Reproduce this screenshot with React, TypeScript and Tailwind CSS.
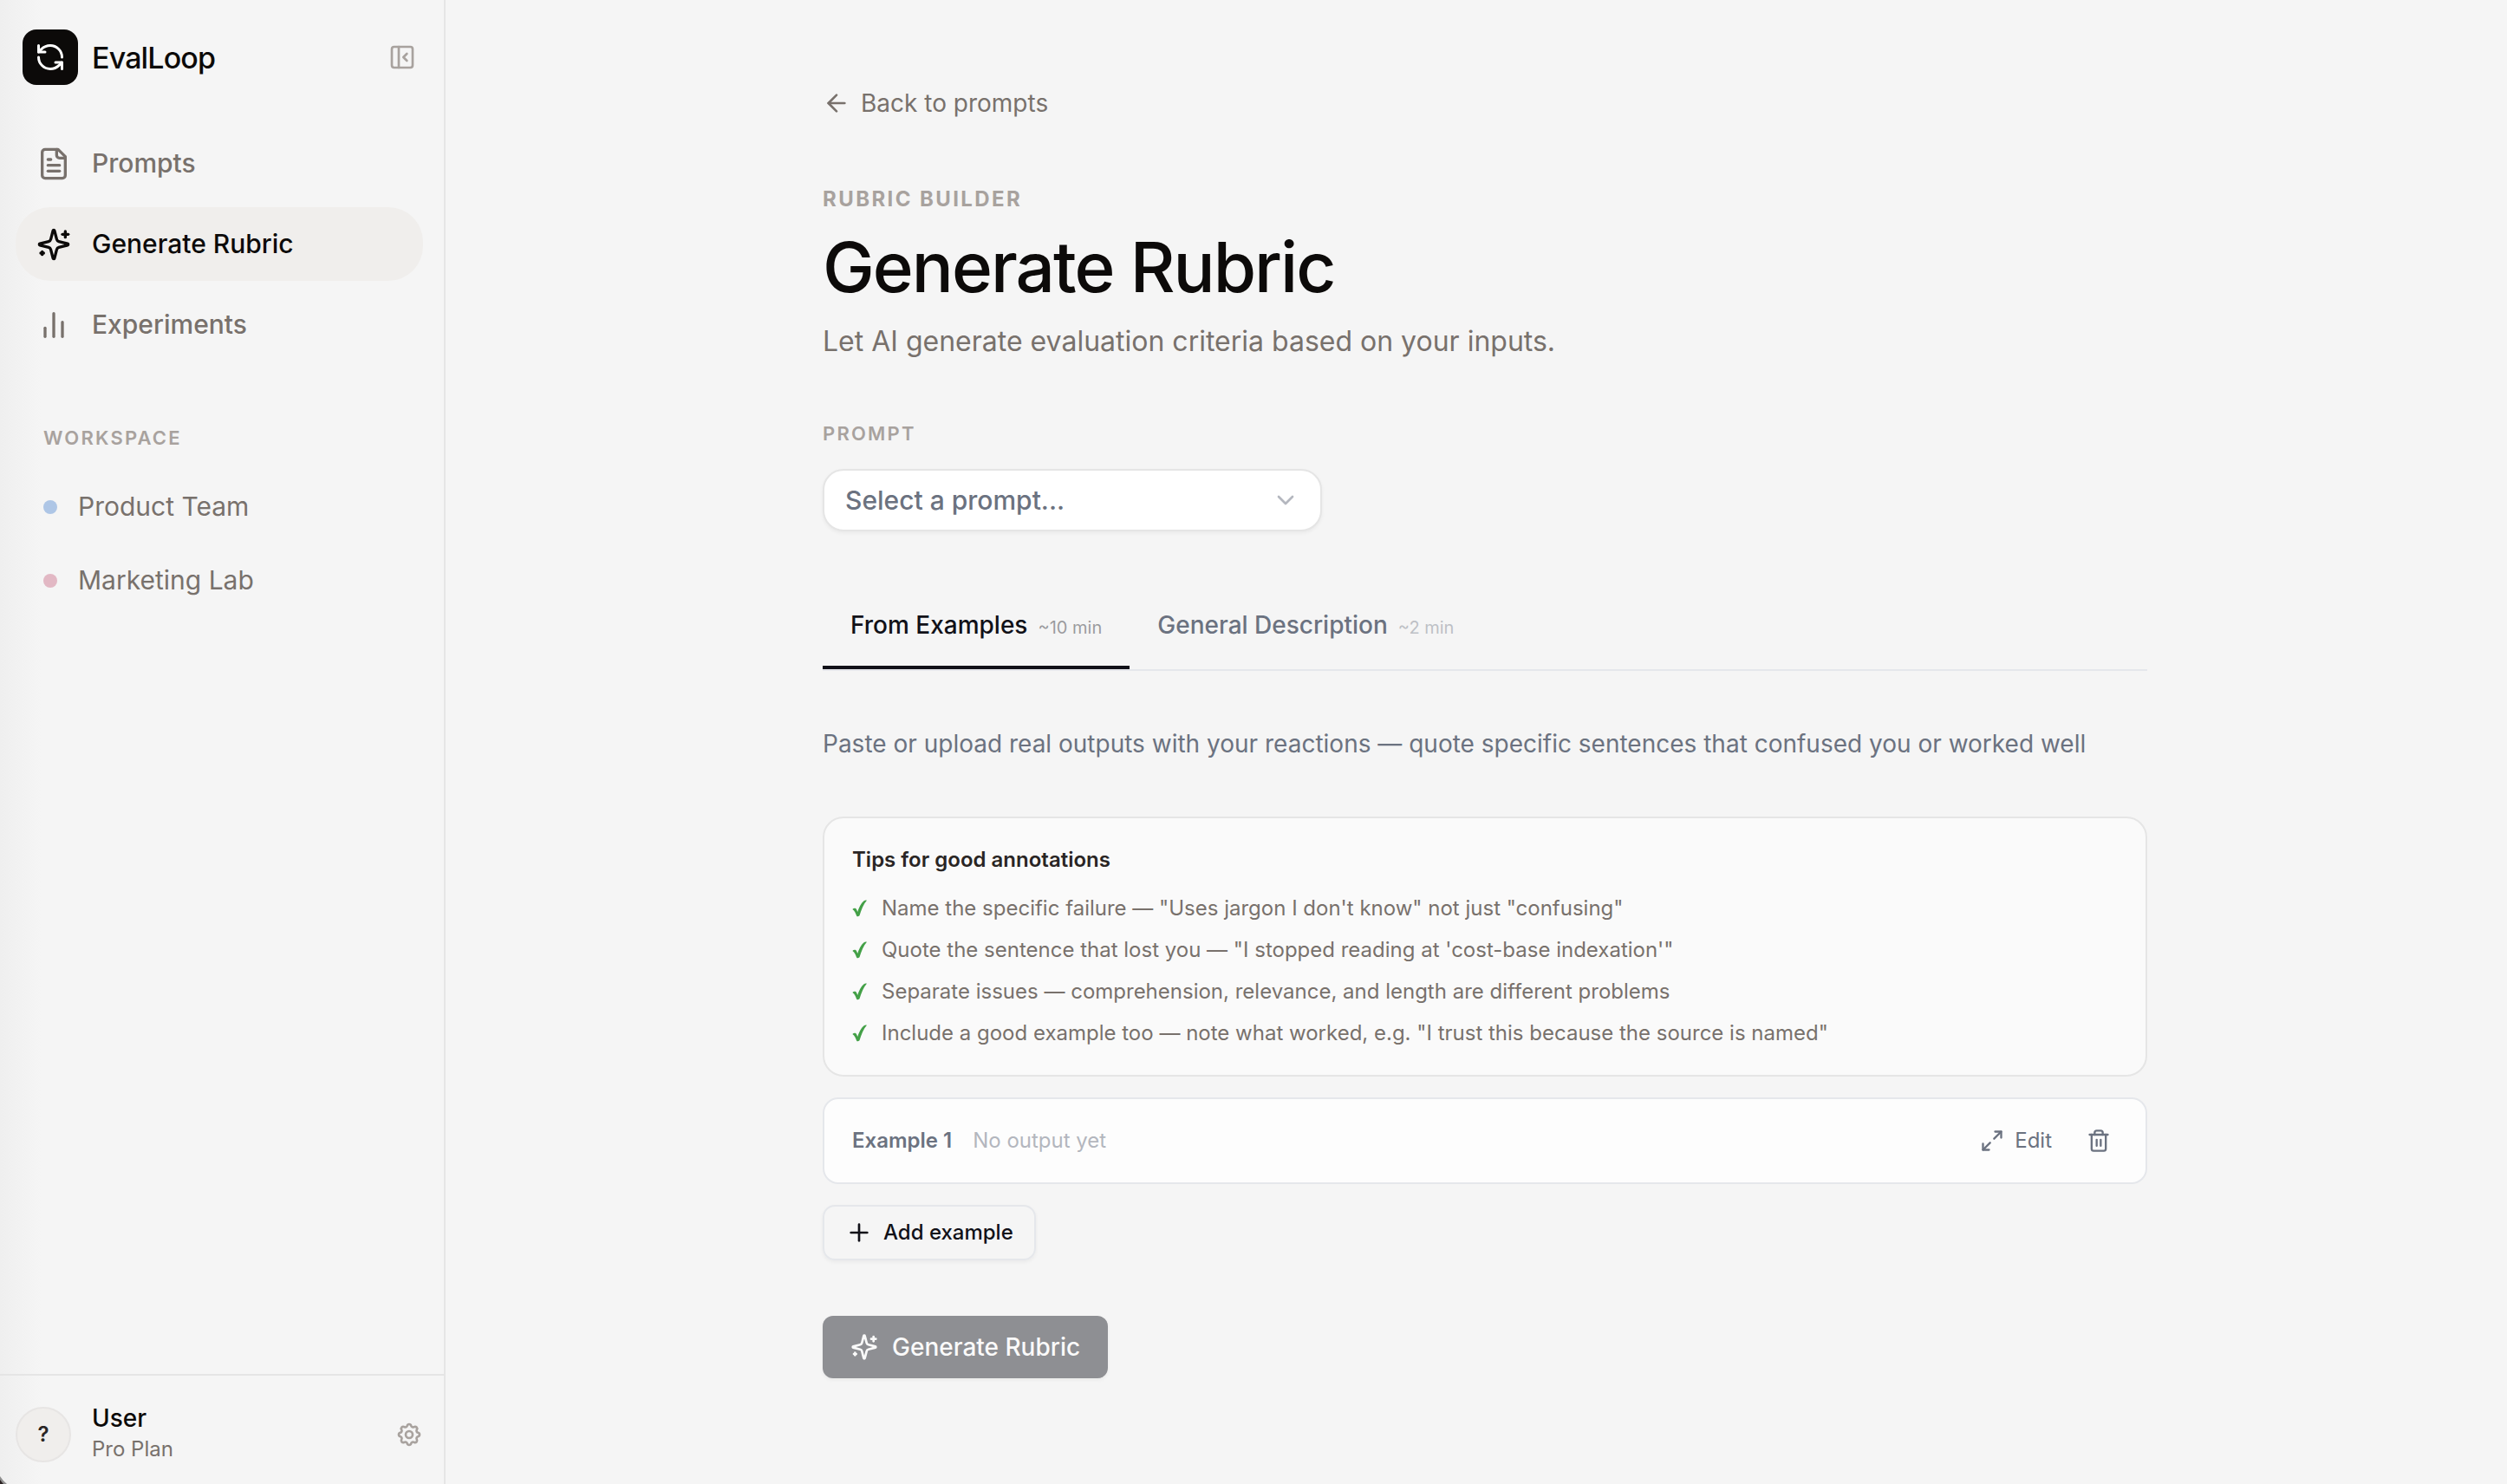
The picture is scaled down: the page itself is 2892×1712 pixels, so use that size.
import React from "react";
import {
  ArrowLeft,
  ChevronDown,
  Maximize2,
  PanelLeftClose,
  Plus,
  RefreshCcw,
  Trash2,
} from "lucide-react";

const tips = [
  `Name the specific failure — "Uses jargon I don't know" not just "confusing"`,
  `Quote the sentence that lost you — "I stopped reading at 'cost-base indexation'"`,
  `Separate issues — comprehension, relevance, and length are different problems`,
  `Include a good example too — note what worked, e.g. "I trust this because the source is named"`,
];

function Icon({ className, children }: { className: string; children: React.ReactNode }) {
  return (
    <svg
      viewBox="0 0 24 24"
      fill="none"
      stroke="currentColor"
      strokeWidth={2}
      strokeLinecap="round"
      strokeLinejoin="round"
      className={className}
    >
      {children}
    </svg>
  );
}

function SparklesIcon({ className }: { className: string }) {
  return (
    <Icon className={className}>
      <path d="M9.937 15.5A2 2 0 0 0 8.5 14.063l-6.135-1.582a.5.5 0 0 1 0-.962L8.5 9.936A2 2 0 0 0 9.937 8.5l1.582-6.135a.5.5 0 0 1 .963 0L14.063 8.5A2 2 0 0 0 15.5 9.937l6.135 1.581a.5.5 0 0 1 0 .964L15.5 14.063a2 2 0 0 0-1.437 1.437l-1.582 6.135a.5.5 0 0 1-.963 0z" />
      <path d="M20 3v4" />
      <path d="M22 5h-4" />
      <path d="M4 17v2" />
      <path d="M5 18H3" />
    </Icon>
  );
}

function FileIcon({ className }: { className: string }) {
  return (
    <Icon className={className}>
      <path d="M15 2H6a2 2 0 0 0-2 2v16a2 2 0 0 0 2 2h12a2 2 0 0 0 2-2V7Z" />
      <path d="M14 2v4a2 2 0 0 0 2 2h4" />
      <path d="M10 9H8" />
      <path d="M16 13H8" />
      <path d="M16 17H8" />
    </Icon>
  );
}

function ChartIcon({ className }: { className: string }) {
  return (
    <Icon className={className}>
      <path d="M18 20V10" />
      <path d="M12 20V4" />
      <path d="M6 20v-6" />
    </Icon>
  );
}

function GearIcon({ className }: { className: string }) {
  return (
    <Icon className={className}>
      <path d="M10.325 4.317c.426-1.756 2.924-1.756 3.35 0a1.724 1.724 0 0 0 2.573 1.066c1.543-.94 3.31.826 2.37 2.37a1.724 1.724 0 0 0 1.065 2.572c1.756.426 1.756 2.924 0 3.35a1.724 1.724 0 0 0-1.066 2.573c.94 1.543-.826 3.31-2.37 2.37a1.724 1.724 0 0 0-2.572 1.065c-.426 1.756-2.924 1.756-3.35 0a1.724 1.724 0 0 0-2.573-1.066c-1.543.94-3.31-.826-2.37-2.37a1.724 1.724 0 0 0-1.065-2.572c-1.756-.426-1.756-2.924 0-3.35a1.724 1.724 0 0 0 1.066-2.573c-.94-1.543.826-3.31 2.37-2.37.996.608 2.296.07 2.572-1.065z" />
      <circle cx="12" cy="12" r="3" />
    </Icon>
  );
}

function CheckMark() {
  return (
    <svg viewBox="0 0 17 20" className="w-[17px] h-5 shrink-0 text-[#43a047]" fill="currentColor">
      <path d="M.4 11C1.800 9.300 4.200 9.400 5 11C5.500 12 5.900 12.900 6.200 13.900C7.900 8.800 10.300 4 13.300 1.500C14.400.6 15.900.5 16.900.7C13.200 4.900 10.500 11.600 8.600 18.100C8.100 19.500 5.600 19.700 5.100 18.400C3.900 15.400 3 12.600.4 11Z" />
    </svg>
  );
}

function Sidebar() {
  return (
    <aside className="w-[514px] shrink-0 flex flex-col border-r-2 border-[#e5e5e5] bg-[linear-gradient(to_right,#efefef,#f5f5f5_48px)]">
      <div className="flex items-center pl-[26px] pr-8 pt-[34px]">
        <div className="size-16 rounded-2xl bg-[#0c0a09] flex items-center justify-center">
          <RefreshCcw className="size-9 text-white" />
        </div>
        <span className="ml-4 pt-0.5 text-[34px] leading-[54px] font-medium tracking-[-0.025em] text-[#0c0a09]">EvalLoop</span>
        <PanelLeftClose className="size-8 ml-auto text-[#a8a29e]" />
      </div>

      <nav className="mt-12 pl-[18px] pr-6 flex flex-col gap-2 text-[30px] leading-[45px] font-medium text-[#78716c]">
        <a className="flex items-center gap-6 px-6 py-5">
          <FileIcon className="size-10" />
          Prompts
        </a>
        <a className="flex items-center gap-6 px-6 py-5 rounded-[40px] bg-[#f0eeec] text-[#0c0a09]">
          <SparklesIcon className="size-10" />
          Generate Rubric
        </a>
        <a className="flex items-center gap-6 px-6 py-5">
          <ChartIcon className="size-10" />
          Experiments
        </a>
      </nav>

      <div className="mt-[71px] px-[50px] text-[22px] leading-[34px] font-semibold tracking-[0.1em] text-[#a8a29e]">
        WORKSPACE
      </div>
      <div className="mt-5 px-[50px] text-[30px] leading-[45px] text-[#78716c]">
        <div className="flex items-center gap-6 py-5">
          <span className="size-4 rounded-full bg-[#aec6e6]" />
          Product Team
        </div>
        <div className="flex items-center gap-6 py-5">
          <span className="size-4 rounded-full bg-[#e2b8c4]" />
          Marketing Lab
        </div>
      </div>

      <div className="mt-auto h-[127px] border-t-2 border-[#e5e5e5] flex items-center pl-[18px] pr-6 pt-2.5">
        <div className="size-16 rounded-full border-2 border-[#e7e5e4] bg-[#f0eeec] flex items-center justify-center text-[24px] font-semibold text-[#292524]">
          ?
        </div>
        <div className="ml-6 pt-0.5">
          <div className="text-[28px] leading-[33px] font-medium text-[#0c0a09]">User</div>
          <div className="text-[24px] leading-[38px] text-[#78716c]">Pro Plan</div>
        </div>
        <GearIcon className="size-8 ml-auto text-[#a8a29e]" />
      </div>
    </aside>
  );
}

export default function App() {
  return (
    <div className="relative w-[2892px] h-[1712px] overflow-hidden flex bg-[#f5f5f5] font-['Inter',sans-serif] antialiased">
      <Sidebar />

      <main className="pl-[435px] pt-[99px] w-[1963px] flex flex-col">
        <a className="flex items-center gap-3 text-[28px] leading-10 text-[#78716c]">
          <ArrowLeft className="size-8" />
          Back to prompts
        </a>

        <div className="mt-[73px] text-[24px] leading-9 font-bold tracking-[0.1em] text-[#a8a29e]">RUBRIC BUILDER</div>
        <h1 className="mt-[15px] text-[80px] leading-[89px] font-medium tracking-[-0.025em] text-[#0c0a09]">
          Generate Rubric
        </h1>
        <p className="mt-[18px] text-[32px] leading-[48px] text-[#78716c]">
          Let AI generate evaluation criteria based on your inputs.
        </p>

        <label className="mt-[66px] text-[22px] leading-8 font-semibold tracking-[0.1em] text-[#a8a29e]">PROMPT</label>
        <button className="mt-[25px] w-[576px] h-[72px] pl-6 pr-6 flex items-center justify-between rounded-3xl border-2 border-[#e5e5e5] bg-white shadow-[0_2px_4px_rgba(0,0,0,0.05)] text-[30px] font-medium text-[#6b7280]">
          Select a prompt...
          <ChevronDown className="size-8 opacity-50" />
        </button>

        <div className="mt-[61px] flex border-b-2 border-[#e5e7eb] text-[28px] font-medium">
          <button className="h-[98px] px-8 flex items-center border-b-4 border-[#111118] text-[#111118]">
            <span>
              From Examples
              <span className="ml-3 text-[20px] font-normal opacity-40">~10 min</span>
            </span>
          </button>
          <button className="h-[98px] px-8 flex items-center border-b-4 border-transparent text-[#6b7280]">
            <span>
              General Description
              <span className="ml-3 text-[20px] font-normal opacity-40">~2 min</span>
            </span>
          </button>
        </div>

        <p className="mt-[61px] text-[28px] leading-[46px] text-[#6b7280] whitespace-nowrap">
          Paste or upload real outputs with your reactions — quote specific sentences that confused you or worked well
        </p>

        <section className="mt-[61px] px-8 pt-[30px] pb-7 rounded-3xl border-2 border-[#e5e5e5] bg-[#fafafa] text-[24px]">
          <h2 className="leading-9 font-semibold text-[#292524]">Tips for good annotations</h2>
          <ul className="mt-[18px] flex flex-col gap-2 text-[#78716c]">
            {tips.map((tip) => (
              <li key={tip} className="flex items-center gap-[17px] leading-10">
                <CheckMark />
                {tip}
              </li>
            ))}
          </ul>
        </section>

        <div className="mt-6 h-[100px] pl-8 pr-10 flex items-center rounded-[18px] border-2 border-[#e5e7eb] bg-[#fdfdfd] text-[24px] text-[#6b7280]">
          <span className="font-semibold">Example 1</span>
          <span className="ml-6 opacity-50">No output yet</span>
          <button className="ml-auto flex items-center gap-3">
            <Maximize2 className="size-7" />
            Edit
          </button>
          <button className="ml-10">
            <Trash2 className="size-7" />
          </button>
        </div>

        <button className="mt-6 h-16 px-6 self-start flex items-center gap-3 rounded-[14px] border-2 border-[#e5e7eb] shadow-[0_2px_4px_rgba(0,0,0,0.05)] text-[24px] font-medium text-[#111118]">
          <Plus className="size-8" />
          Add example
        </button>

        <button className="mt-16 h-[72px] px-8 self-start flex items-center gap-4 rounded-xl bg-[#8e8f93] shadow-[0_2px_4px_rgba(0,0,0,0.05)] text-[28px] font-medium text-[#fafafa]">
          <SparklesIcon className="size-8" />
          Generate Rubric
        </button>
      </main>

      {/* rounded window corner */}
      <svg viewBox="0 0 8 9" className="absolute bottom-0 left-0 w-2 h-[9px]">
        <path d="M0 0 Q3 5 8 9 H0 Z" fill="#8f8f8f" />
        <path d="M0 4 Q2 7 4 9 H0 Z" fill="#2a2222" />
      </svg>
    </div>
  );
}
